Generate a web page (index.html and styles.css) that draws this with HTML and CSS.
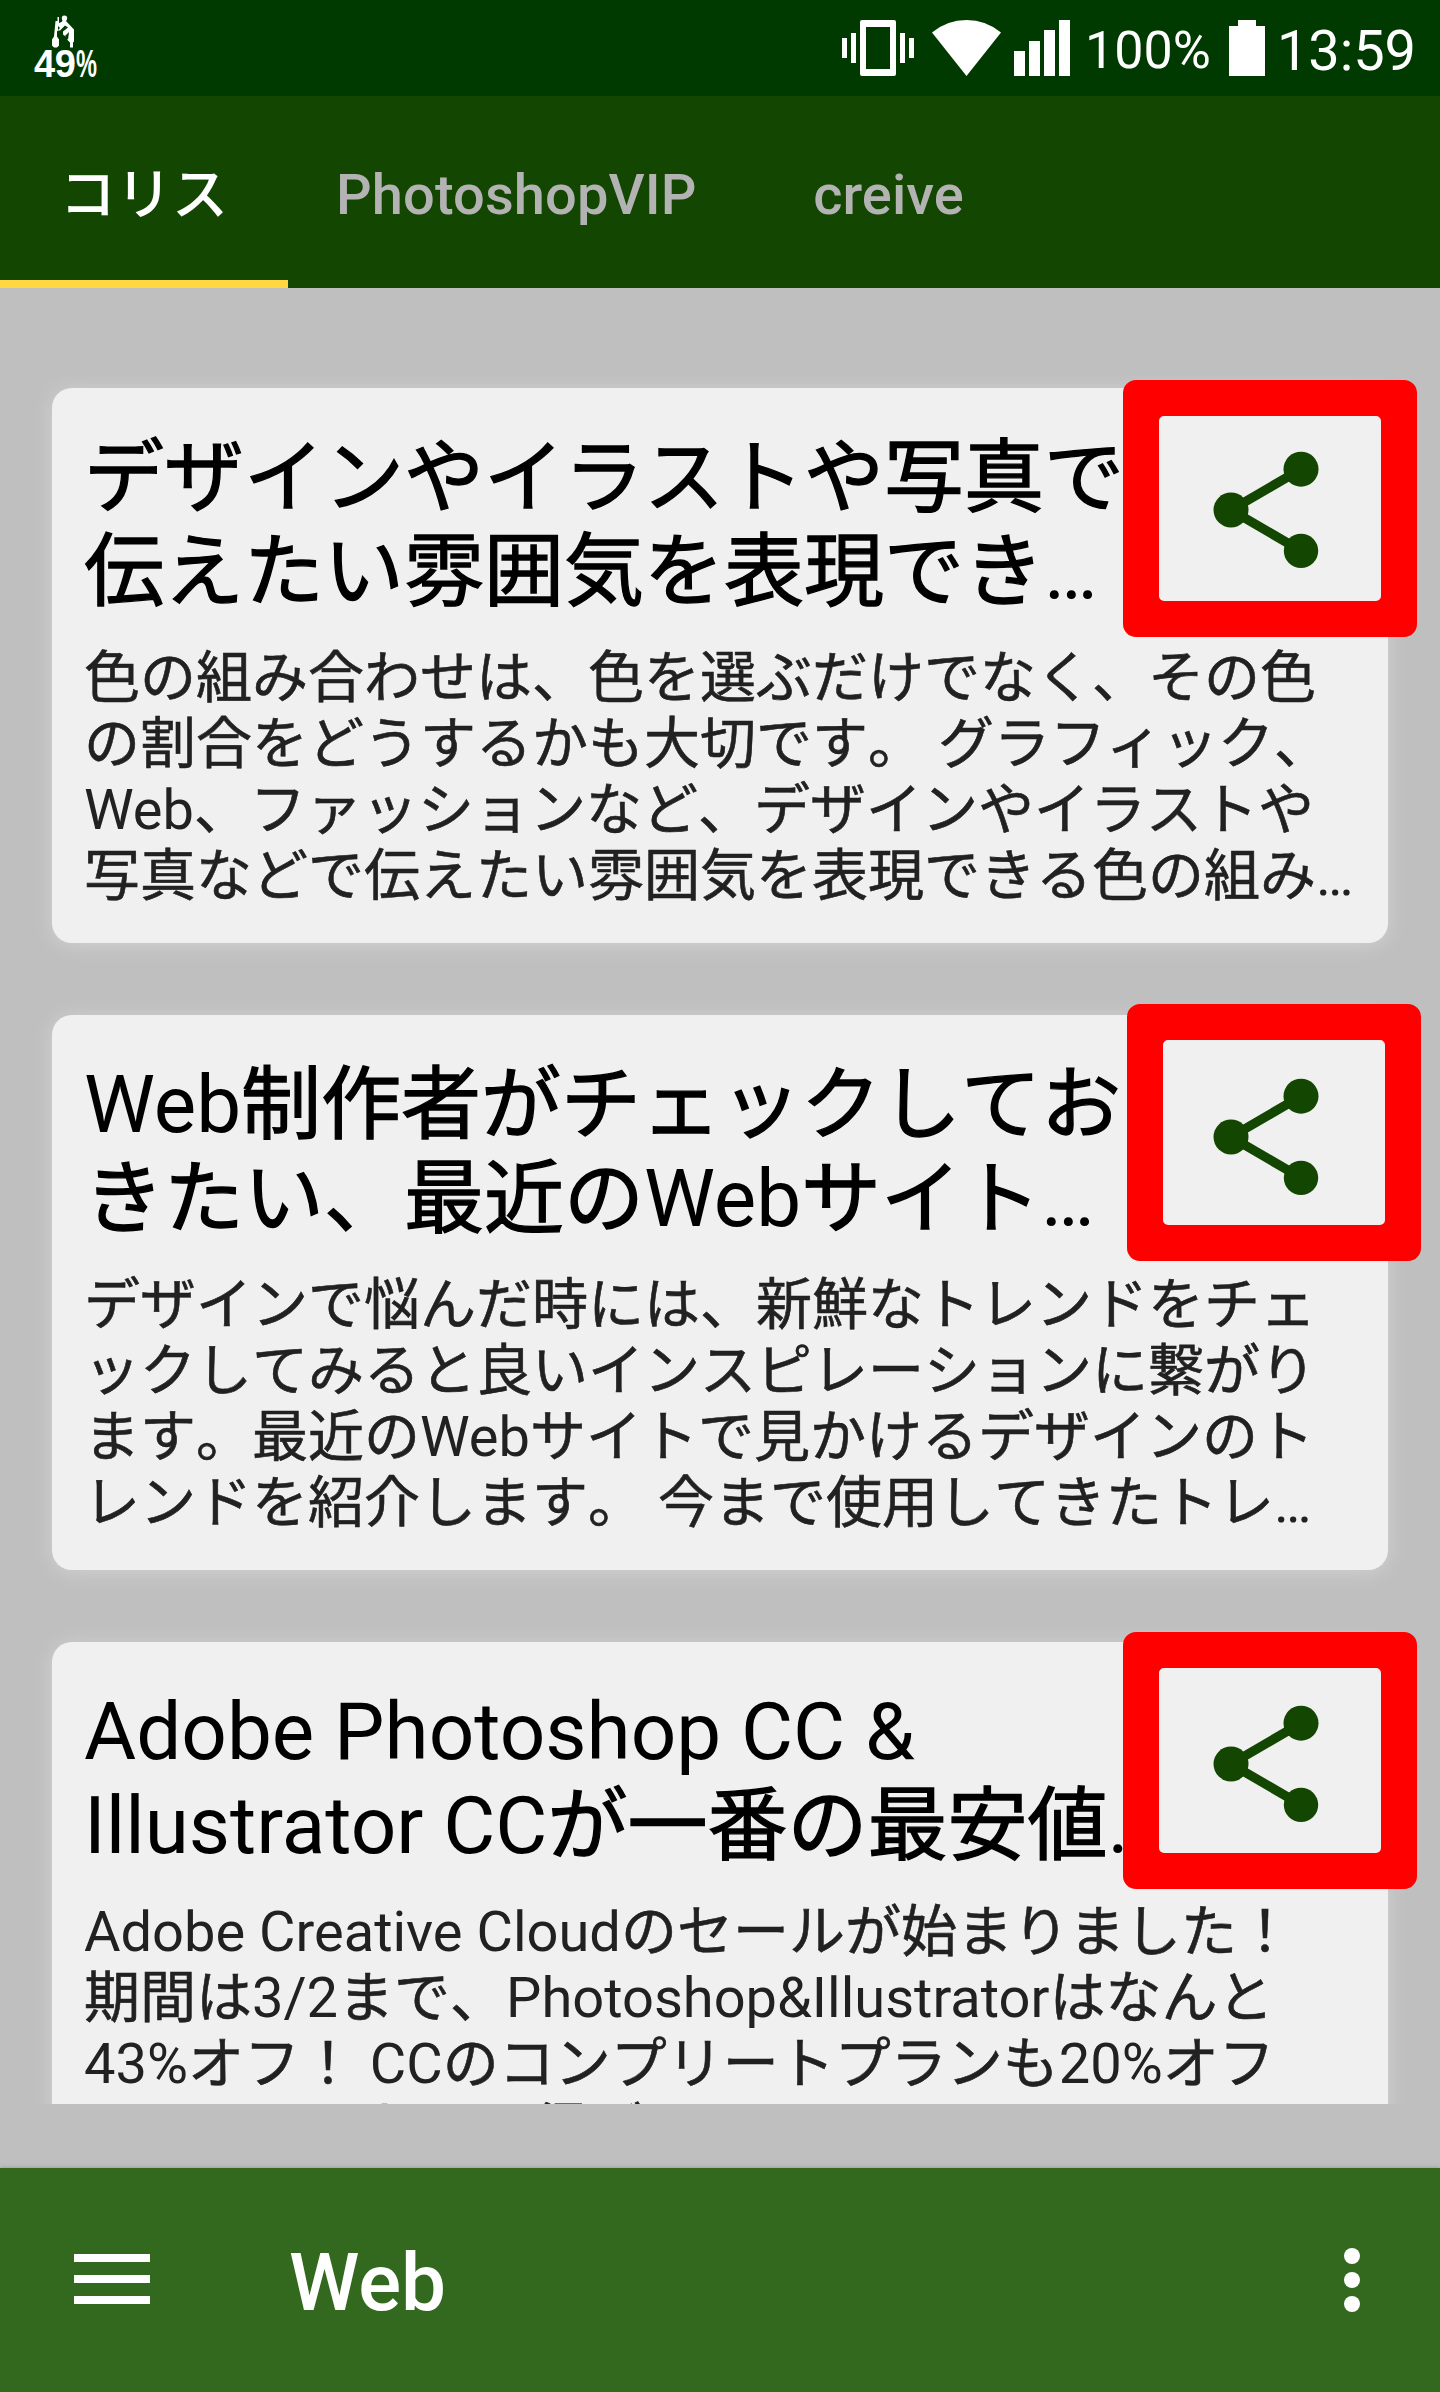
FILE: index.html
```html
<!DOCTYPE html>
<html lang="ja">
<head>
<meta charset="utf-8">
<title>Web</title>
<link rel="stylesheet" href="styles.css">
</head>
<body>
<svg class="defs" aria-hidden="true">
  <symbol id="share" viewBox="0 0 24 24">
    <path d="M18 5L6 12l12 7" fill="none" stroke="currentColor" stroke-width="1.6"/>
    <circle cx="18" cy="5" r="3"/><circle cx="6" cy="12" r="3"/><circle cx="18" cy="19" r="2.95"/>
  </symbol>
</svg>
<div class="screen">
  <header class="status">
    <svg class="battery-badge" width="68" height="80" viewBox="0 0 68 80">
      <path d="M22.500 7h2v-4h1.500v6l2.500-1 1-1q-2-5 1.500-5.500 4 0 3 4l-1 1.500 8 8.500v12l-1 1v5h-3v-5l-3-3v-2l-4-3v-3l5-4-3-2-5 5h-2l-1 1v5l2 3v6l-2 2h-3l-2-2v-6l2-3z"/>
      <path class="cut" d="M36 18l-4 4 3 4zM25 12v4l2-2z"/>
      <text class="badge-text" x="1" y="63" textLength="42">49</text>
      <text class="badge-text" x="43" y="63" textLength="21" lengthAdjust="spacingAndGlyphs">%</text>
    </svg>
    <div class="indicators">
      <svg class="vibrate" width="72" height="56" viewBox="0 0 72 56">
        <path d="M0 18h5v20H0zM9 13h5v30H9zM58 13h5v30h-5zM67 18h5v20h-5z"/>
        <path fill-rule="evenodd" d="M20 0h32q2 0 2 2v52q0 2-2 2H20q-2 0-2-2V2q0-2 2-2zM24 7v42h24V7z"/>
      </svg>
      <svg class="wifi" width="69" height="56" viewBox="0 0 69 56"><path d="M0 12.500Q15 0 34.500 0T69 12.500L34.500 56z"/></svg>
      <svg class="signal" width="56" height="56" viewBox="0 0 56 56"><path d="M0 31h11v25H0zM15 21h11v35H15zM30 10h11v46H30zM45 0h11v56H45z"/></svg>
      <span class="percent">100%</span>
      <svg class="battery" width="36" height="56" viewBox="0 0 36 56"><path d="M9 0h18v6h9v50H0V6h9z"/></svg>
      <span class="clock">13:59</span>
    </div>
  </header>
  <nav class="tabs">
    <a class="tab active">コリス</a>
    <a class="tab">PhotoshopVIP</a>
    <a class="tab">creive</a>
  </nav>
  <main class="feed">
    <article class="card">
      <h2>デザインやイラストや写真で<br>伝えたい雰囲気を表現でき<span class="en">…</span></h2>
      <p>色の組み合わせは、色を選ぶだけでなく、その色<br>の割合をどうするかも大切です。 グラフィック、<br><span class="en">Web</span>、ファッションなど、デザインやイラストや<br>写真などで伝えたい雰囲気を表現できる色の組み<span class="en">…</span></p>
      <svg class="share"><use href="#share"/></svg>
      <div class="mark mark-a"></div>
    </article>
    <article class="card">
      <h2><span class="en">Web</span>制作者がチェックしてお<br>きたい、最近の<span class="en">Web</span>サイト<span class="en">…</span></h2>
      <p>デザインで悩んだ時には、新鮮なトレンドをチェ<br>ックしてみると良いインスピレーションに繋がり<br>ます。最近の<span class="en">Web</span>サイトで見かけるデザインのト<br>レンドを紹介します。 今まで使用してきたトレ<span class="en">…</span></p>
      <svg class="share"><use href="#share"/></svg>
      <div class="mark mark-b"></div>
    </article>
    <article class="card">
      <h2><span class="en">Adobe Photoshop CC &amp;<br>Illustrator CC</span>が一番の最安値<span class="en">…</span></h2>
      <p><span class="en">Adobe Creative Cloud</span>のセールが始まりました！<br>期間は<span class="en">3/2</span>まで、<span class="en">Photoshop&amp;Illustrator</span>はなんと<br><span class="en">43%</span>オフ！ <span class="en">CC</span>のコンプリートプランも<span class="en">20%</span>オフ<br>にてまた、お買い得がついてきます</p>
      <svg class="share"><use href="#share"/></svg>
      <div class="mark mark-c"></div>
    </article>
  </main>
  <footer class="toolbar">
    <svg class="menu" width="76" height="50" viewBox="0 0 76 50"><path d="M0 0h76v8H0zM0 21h76v8H0zM0 42h76v8H0z"/></svg>
    <h1>Web</h1>
    <svg class="more" width="16" height="64" viewBox="0 0 16 64"><circle cx="8" cy="8" r="8"/><circle cx="8" cy="32" r="8"/><circle cx="8" cy="56" r="8"/></svg>
  </footer>
</div>
</body>
</html>
```
FILE: styles.css
```css
* { box-sizing: border-box; }
body {
  margin: 0;
  font-family: Roboto, "Noto Sans CJK JP", sans-serif;
  text-spacing-trim: space-all;
}
svg { display: block; fill: currentColor; flex: none; }
.defs { display: none; }

.screen {
  display: flex;
  flex-direction: column;
  width: 1440px;
  height: 2392px;
  overflow: hidden;
  background: #bfbfbf;
}

.status {
  display: flex;
  justify-content: space-between;
  flex: none;
  height: 96px;
  padding: 0 25px 0 33px;
  background: #003a00;
  color: #fff;
}
.battery-badge { margin-top: 14px; }
.battery-badge .cut { fill: #003a00; }
.badge-text { font: bold 38px "Liberation Sans", sans-serif; }
.indicators { display: flex; align-items: flex-start; padding-top: 20px; }
.wifi { margin-left: 18px; }
.signal { margin-left: 13px; }
.percent {
  width: 124px;
  margin-left: 15px;
  font-size: 52px;
  line-height: 62px;
}
.battery { margin-left: 20px; }
.clock {
  width: 138px;
  margin-left: 12px;
  font-size: 56px;
  line-height: 62px;
  letter-spacing: -0.1px;
}

.tabs {
  display: flex;
  flex: none;
  height: 192px;
  background: #134600;
}
.tab {
  min-width: 288px;
  padding: 66px 48px 0;
  border-bottom: 8px solid transparent;
  color: #b3b3b3;
  font-size: 56px;
  font-weight: 500;
  line-height: 66px;
  letter-spacing: 0.1px;
  text-align: center;
  white-space: nowrap;
}
.tab.active { border-color: #ffd740; color: #fff; }

.feed {
  display: flex;
  flex-direction: column;
  gap: 72px;
  flex: none;
  height: 1816px;
  padding: 100px 0 0 52px;
  overflow: hidden;
}
.card {
  position: relative;
  flex: none;
  width: 1336px;
  height: 555px;
  padding: 43px 32px 0;
  border-radius: 20px;
  background: #f0f0f0;
  box-shadow: 0 2px 20px rgba(240, 240, 240, 0.4);
  font-kerning: none;
  white-space: nowrap;
}
.card h2 {
  margin: 0;
  color: #000;
  font-size: 80px;
  font-weight: 400;
  line-height: 94px;
  -webkit-text-stroke: 1.3px;
}
.card p {
  margin: 26px 0 0;
  color: #212121;
  font-size: 56px;
  line-height: 66px;
  -webkit-text-stroke: 0.6px;
}
/* Latin runs keep pair kerning and their regular weight */
.card .en {
  font-kerning: normal;
  -webkit-text-stroke: 0;
}
.share {
  position: absolute;
  left: 1144px;
  top: 52px;
  width: 140px;
  height: 140px;
  color: #134600;
}
.mark {
  position: absolute;
  left: 1071px;
  top: -8px;
  width: 294px;
  height: 257px;
  border: 36px solid #f00;
  border-radius: 13px;
}
/* inner edge of the frame has its own small corner radius */
.mark::after {
  content: "";
  position: absolute;
  inset: -4px;
  border: 4px solid #f00;
  border-radius: 9px;
}
.mark-b { left: 1075px; top: -11px; }
.mark-c { top: -10px; }

.toolbar {
  display: flex;
  align-items: center;
  flex: none;
  height: 224px;
  margin-top: auto;
  padding: 0 80px 0 74px;
  background: #33691e;
  box-shadow: 0 0 4px rgba(0, 0, 0, 0.25);
  color: #fff;
}
.toolbar h1 {
  margin: 6px 0 0 139px;
  font-size: 80px;
  font-weight: 500;
  line-height: 94px;
}
.menu { margin-top: -2px; }
.more { margin-left: auto; }
```
